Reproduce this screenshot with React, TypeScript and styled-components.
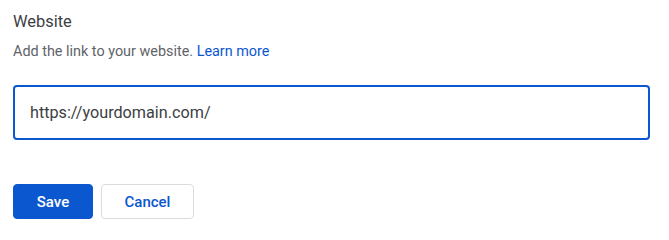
import React, {useState} from 'react'
import styled, {createGlobalStyle} from 'styled-components'

const GlobalStyle = createGlobalStyle`
  body {
    margin: 0;
    background: #ffffff;
    font-family: Roboto, "Liberation Sans", Arial, sans-serif;
  }
`

const Form = styled.form`
  display: flex;
  flex-direction: column;
  padding: 10px 19px 0 13px;
`

const Title = styled.h2`
  margin: 0;
  color: #3c4043;
  font-size: 16.4px;
  font-weight: 400;
  line-height: 24px;
`

const Hint = styled.p`
  margin: 8px 0 0;
  color: #5f6368;
  font-size: 14.4px;
  line-height: 20px;
`

const Link = styled.a`
  color: #0b57d0;
  text-decoration: none;
`

const Field = styled.input`
  box-sizing: border-box;
  margin-top: 23px;
  width: 100%;
  height: 55px;
  padding: 0 15px;
  border: 2px solid #0b57d0;
  border-radius: 4px;
  outline: none;
  color: #3c4043;
  font-family: inherit;
  font-size: 16.2px;
`

const Actions = styled.div`
  display: flex;
  gap: 8px;
  margin-top: 44px;
`

const Button = styled.button<{$primary?: boolean}>`
  box-sizing: border-box;
  height: 35px;
  padding: 0;
  width: ${(p) => (p.$primary ? '80px' : '93px')};
  border: 1px solid ${(p) => (p.$primary ? '#0b57d0' : '#dadce0')};
  border-radius: 4px;
  background: ${(p) => (p.$primary ? '#0b57d0' : '#ffffff')};
  color: ${(p) => (p.$primary ? '#ffffff' : '#0b57d0')};
  font-family: inherit;
  font-size: 15px;
  font-weight: 500;
  cursor: pointer;
`

export default function App() {
  const [url, setUrl] = useState('https://yourdomain.com/')

  return (
    <>
      <GlobalStyle />
      <Form onSubmit={(e) => e.preventDefault()}>
        <Title>Website</Title>
        <Hint>
          Add the link to your website. <Link href="#">Learn more</Link>
        </Hint>
        <Field value={url} onChange={(e) => setUrl(e.target.value)} />
        <Actions>
          <Button $primary type="submit">Save</Button>
          <Button type="button">Cancel</Button>
        </Actions>
      </Form>
    </>
  )
}
